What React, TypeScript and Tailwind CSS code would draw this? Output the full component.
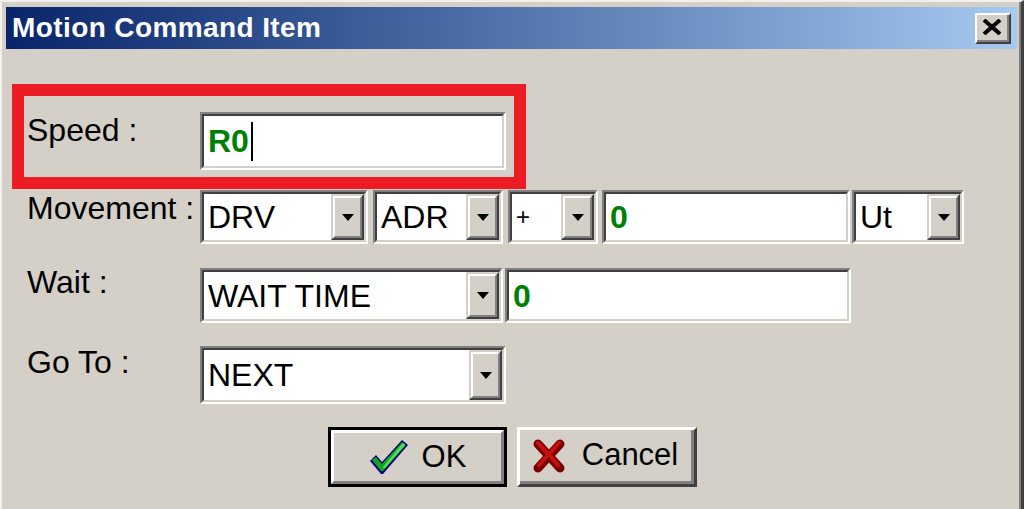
import React from 'react';

const face = 'bg-[#d4d0c8]';

function Sunken({ className, children }: { className?: string; children?: React.ReactNode }) {
    return (
        <div className={`border-2 border-t-[#808080] border-l-[#808080] border-b-white border-r-white ${className ?? ''}`}>
            <div className="h-full w-full border-2 border-t-[#404040] border-l-[#404040] border-b-[#d4d0c8] border-r-[#d4d0c8] bg-white flex items-center">
                {children}
            </div>
        </div>
    );
}

function DropButton() {
    return (
        <div className="h-full w-[33px] shrink-0 border-2 border-t-[#d4d0c8] border-l-[#d4d0c8] border-b-[#404040] border-r-[#404040]">
            <div className={`h-full w-full border-2 border-t-white border-l-white border-b-[#808080] border-r-[#808080] ${face} flex items-center justify-center`}>
                <div className="w-0 h-0 border-l-[6px] border-r-[6px] border-t-[7px] border-l-transparent border-r-transparent border-t-black" />
            </div>
        </div>
    );
}

function Combo({ value, className, small }: { value: string; className?: string; small?: boolean }) {
    return (
        <Sunken className={className}>
            <span className={`flex-1 pl-[4px] whitespace-nowrap ${small ? 'text-[24px]' : 'text-[32px]'}`}>{value}</span>
            <DropButton />
        </Sunken>
    );
}

function CheckIcon() {
    return (
        <svg width="40" height="37" viewBox="0 0 40 37">
            <polygon points="1,22 7,16 13,23 33,1 39,6 14,35 12,35" fill="#000080" />
            <polygon points="3,21 7,18 13,25 33,3 37,6 14,32 12,32" fill="#10a818" />
            <polygon points="34,4 36,6 15,30 14,28" fill="#58e058" />
        </svg>
    );
}

function CrossIcon() {
    return (
        <svg width="32" height="34" viewBox="0 0 32 34">
            <line x1="5" y1="5" x2="27" y2="29" stroke="#7a0000" strokeWidth="9" strokeLinecap="round" />
            <line x1="27" y1="5" x2="5" y2="29" stroke="#7a0000" strokeWidth="9" strokeLinecap="round" />
            <line x1="5" y1="4" x2="25" y2="26" stroke="#c81010" strokeWidth="4" strokeLinecap="round" />
            <line x1="26" y1="4" x2="6" y2="26" stroke="#c81010" strokeWidth="4" strokeLinecap="round" />
        </svg>
    );
}

export default function App() {
    return (
        <div className="w-[1024px] h-[509px] overflow-hidden flex flex-col bg-[#d4d0c8] border-l-2 border-t-2 border-l-[#f2f0eb] border-t-[#f2f0eb] border-r-[3px] border-r-[#404040] font-['Liberation_Sans',Arial,sans-serif] text-black">
            <div className="flex-1 flex flex-col pl-[4px] pt-[5px] pr-[2px] border-r-2 border-r-[#808080]">
                {/* Title bar */}
                <div className="h-[42px] shrink-0 flex items-center justify-between pl-[6px] pr-[6px] bg-gradient-to-r from-[#0a246a] to-[#a6caf0]">
                    <span className="text-white font-bold text-[28px] tracking-[0.4px] leading-none">Motion Command Item</span>
                    <div className="w-[36px] h-[31px] border-2 border-t-white border-l-white border-b-[#404040] border-r-[#404040]">
                        <div className={`h-full w-full border-b-2 border-r-2 border-b-[#808080] border-r-[#808080] ${face} flex items-center justify-center`}>
                            <svg width="20" height="16" viewBox="0 0 20 16">
                                <line x1="2" y1="1" x2="18" y2="15" stroke="black" strokeWidth="4" />
                                <line x1="18" y1="1" x2="2" y2="15" stroke="black" strokeWidth="4" />
                            </svg>
                        </div>
                    </div>
                </div>

                {/* Speed, highlighted */}
                <div className="mt-[35px] ml-[6px] w-[514px] border-[12px] border-[#ed1c24] pl-[3px] pt-[16px] pb-[7px] flex items-start">
                    <div className="w-[173px] text-[32px] leading-[37px]">Speed :</div>
                    <Sunken className="w-[306px] h-[58px]">
                        <span className="pl-[4px] text-[32px] font-bold text-[#008000] leading-none">R0</span>
                        <span className="ml-[2px] w-[2px] h-[39px] bg-black" />
                    </Sunken>
                </div>

                {/* Movement */}
                <div className="mt-[1px] ml-[21px] flex items-start">
                    <div className="w-[173px] text-[32px] leading-[37px]">Movement :</div>
                    <Combo value="DRV" className="w-[168px] h-[54px]" />
                    <Combo value="ADR" className="ml-[5px] w-[130px] h-[54px]" />
                    <Combo value="+" small className="ml-[5px] w-[90px] h-[54px]" />
                    <Sunken className="ml-[4px] w-[248px] h-[54px]">
                        <span className="pl-[4px] text-[32px] font-bold text-[#008000]">0</span>
                    </Sunken>
                    <Combo value="Ut" className="ml-[2px] w-[112px] h-[54px]" />
                </div>

                {/* Wait */}
                <div className="mt-[24px] ml-[21px] flex items-start">
                    <div className="w-[173px] text-[32px] leading-[37px] -mt-[4px]">Wait :</div>
                    <Combo value="WAIT TIME" className="w-[303px] h-[55px]" />
                    <Sunken className="ml-[2px] w-[346px] h-[55px]">
                        <span className="pl-[4px] text-[32px] font-bold text-[#008000]">0</span>
                    </Sunken>
                </div>

                {/* Go To */}
                <div className="mt-[23px] ml-[21px] flex items-start">
                    <div className="w-[173px] text-[32px] leading-[37px] -mt-[2px]">Go To :</div>
                    <Combo value="NEXT" className="w-[306px] h-[58px]" />
                </div>

                {/* Buttons */}
                <div className="mt-[23px] flex justify-center gap-[10px] pl-[2px]">
                    <div className="w-[179px] h-[60px] border-[3px] border-black">
                        <div className="h-full w-full border-[3px] border-t-white border-l-white border-b-[#808080] border-r-[#808080] flex items-center justify-center gap-[13px]">
                            <CheckIcon />
                            <span className="text-[31px]">OK</span>
                        </div>
                    </div>
                    <div className="w-[180px] h-[60px] border-[3px] border-t-white border-l-white border-b-[#404040] border-r-[#404040]">
                        <div className="h-full w-full border-b-[3px] border-r-[3px] border-b-[#808080] border-r-[#808080] flex items-center justify-center gap-[17px]">
                            <CrossIcon />
                            <span className="text-[31px]">Cancel</span>
                        </div>
                    </div>
                </div>
            </div>
        </div>
    );
}
